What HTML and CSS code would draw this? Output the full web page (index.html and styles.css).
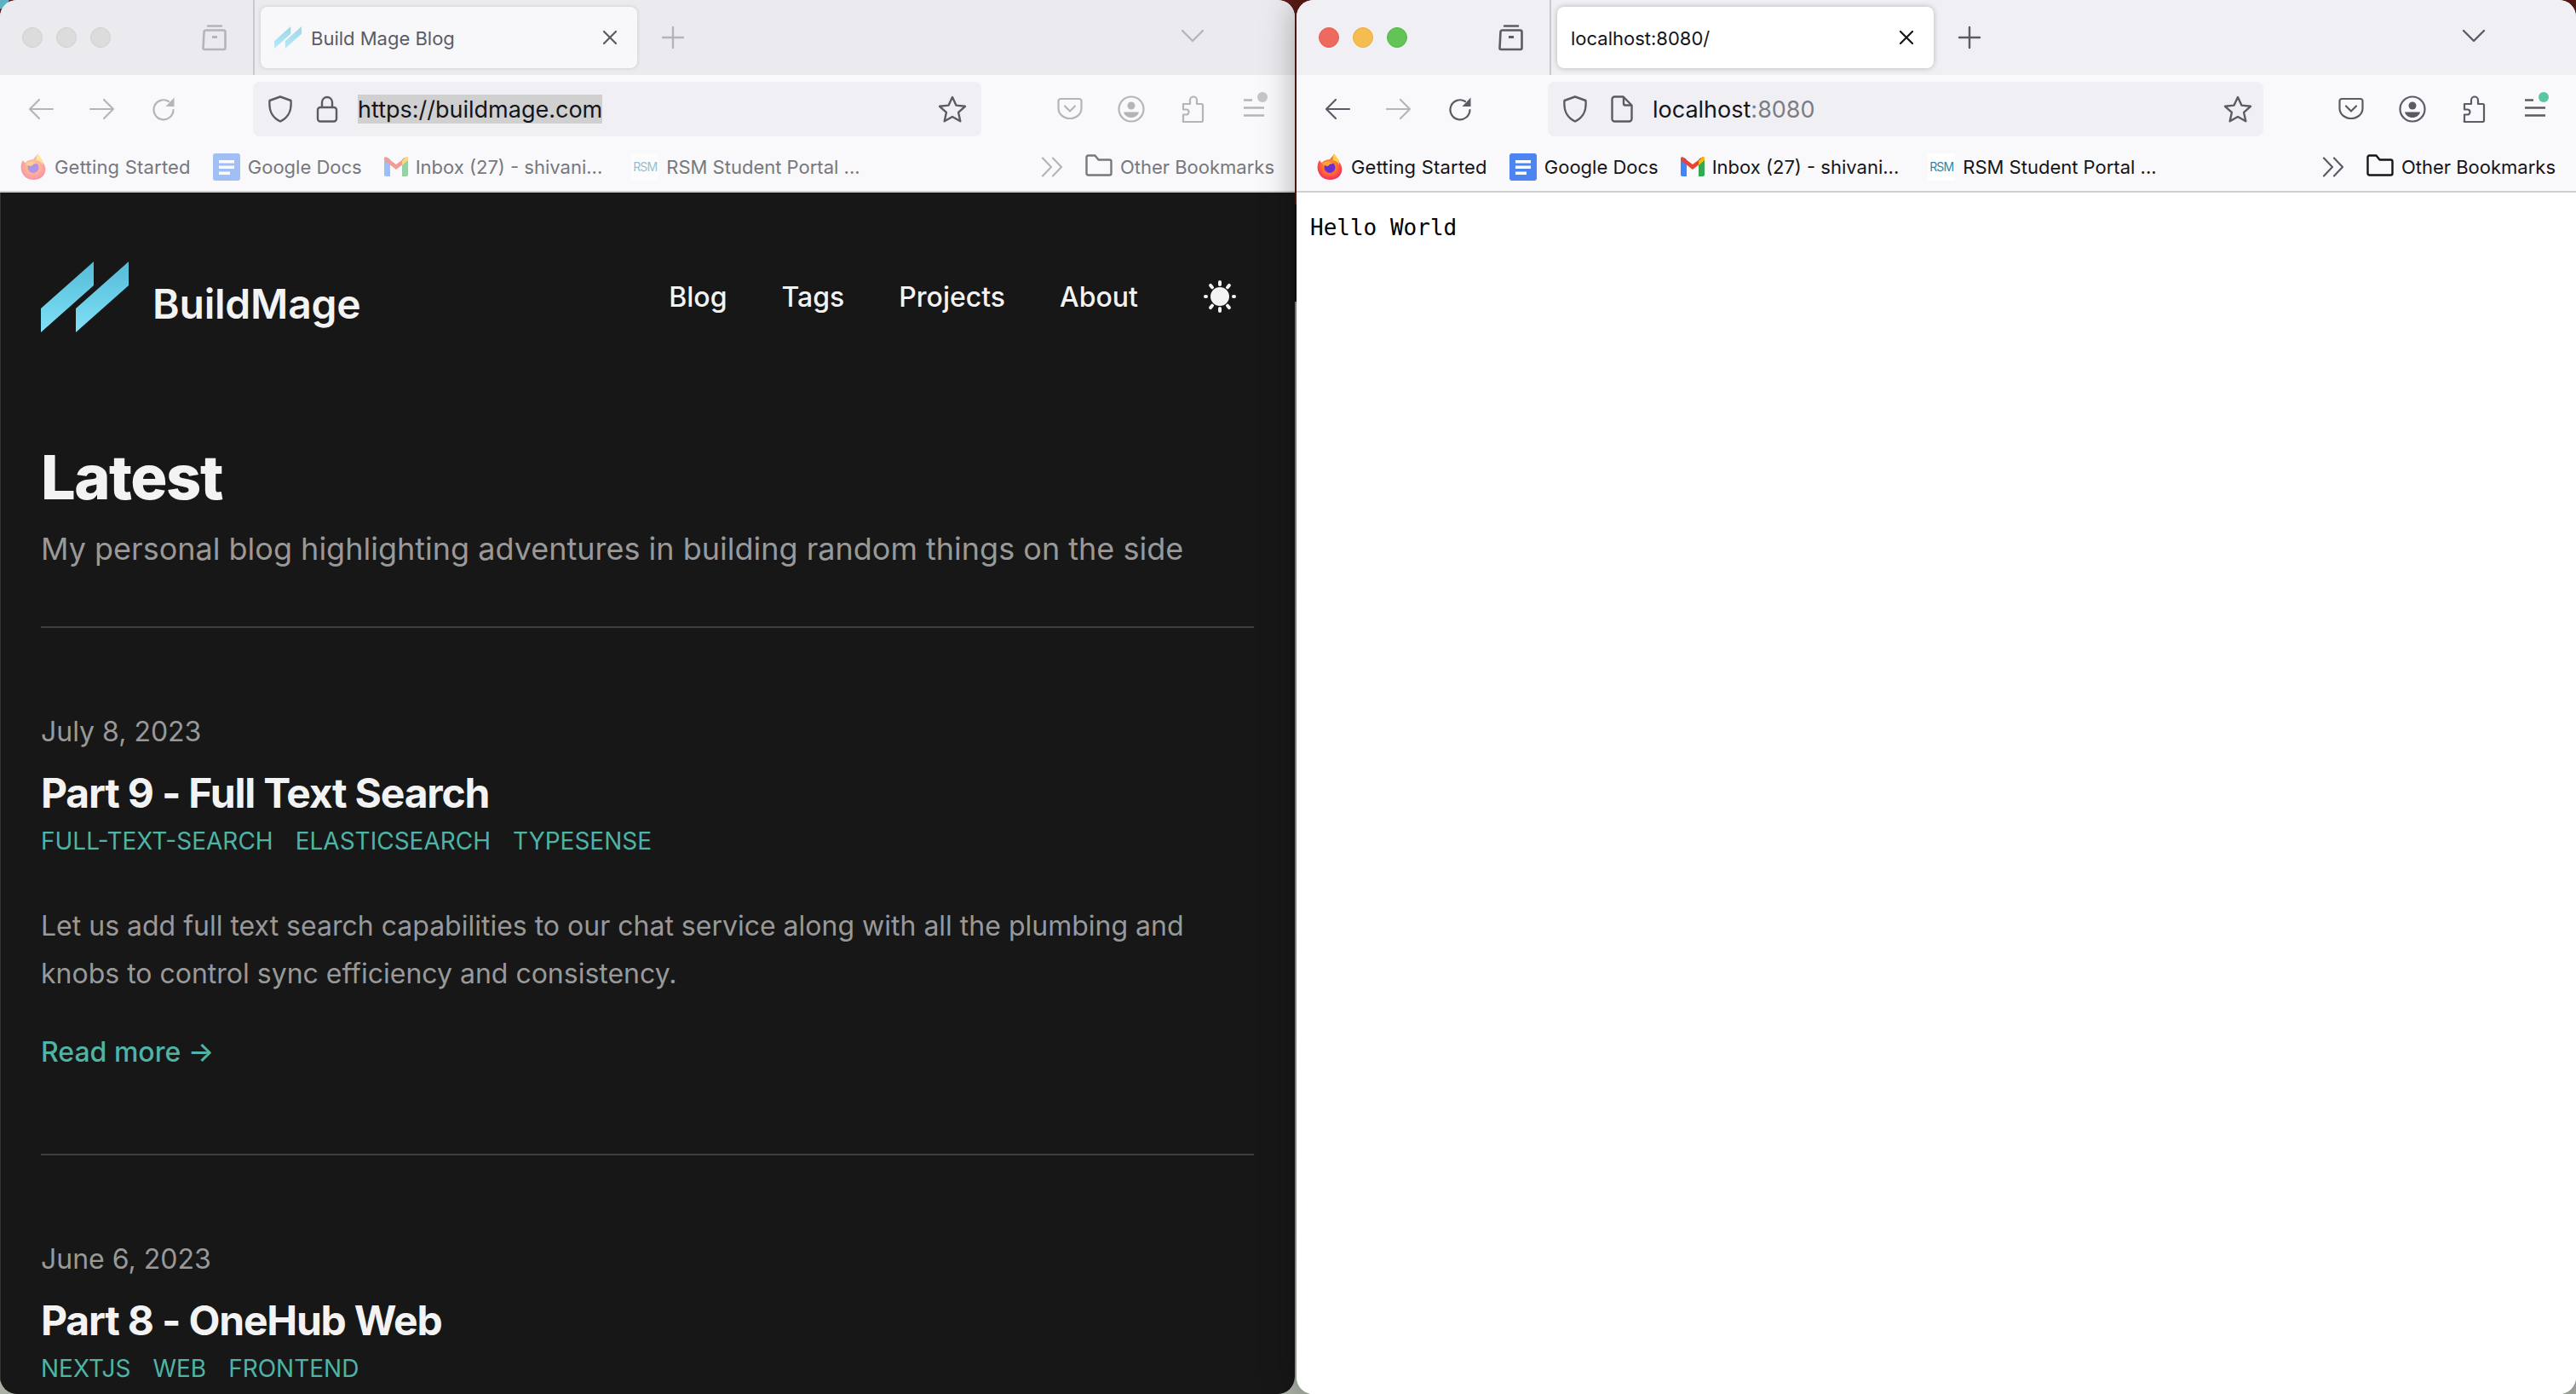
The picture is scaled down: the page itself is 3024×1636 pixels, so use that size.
FILE: index.html
```html
<!DOCTYPE html>
<html lang="en">

<head>
    <meta charset="UTF-8" />
    <title>Browser windows</title>
    <link rel="stylesheet" href="styles.css">
</head>

<body>

    <svg class="sprite" width="0" height="0" aria-hidden="true">
        <defs>
            <linearGradient id="logoFill" x1="0" y1="0" x2="0" y2="1">
                <stop offset="0" stop-color="#55bbd8" />
                <stop offset="1" stop-color="#80e1f7" />
            </linearGradient>
            <radialGradient id="foxFill" cx="0.5" cy="0.45" r="0.6">
                <stop offset="0" stop-color="#ffb01e" />
                <stop offset="0.65" stop-color="#ff5a3c" />
                <stop offset="1" stop-color="#f0206c" />
            </radialGradient>
        </defs>
        <symbol id="i-tabs" viewBox="0 0 32 32">
            <path d="M8 2.500h16M3.500 9.500a2 2 0 0 1 2-2h21a2 2 0 0 1 2 2v19a1.500 1.500 0 0 1-1.500 1.500h-23a1.500 1.500 0 0 1-1.500-1.500z" fill="none" stroke="currentColor" stroke-width="2.600" stroke-linecap="round" />
            <path d="M13 15.500h6" fill="none" stroke="currentColor" stroke-width="3" />
        </symbol>
        <symbol id="i-close" viewBox="0 0 20 20">
            <path d="M3 3l14 14M17 3L3 17" fill="none" stroke="currentColor" stroke-width="2.200" stroke-linecap="round" />
        </symbol>
        <symbol id="i-plus" viewBox="0 0 28 28">
            <path d="M14 2v24M2 14h24" fill="none" stroke="currentColor" stroke-width="2.400" stroke-linecap="round" />
        </symbol>
        <symbol id="i-down" viewBox="0 0 28 16">
            <path d="M2 2l12 12L26 2" fill="none" stroke="currentColor" stroke-width="2.400" stroke-linecap="round" stroke-linejoin="round" />
        </symbol>
        <symbol id="i-back" viewBox="-4 -4 36 32">
            <path d="M12 1L1 12l11 11M1 12h27" fill="none" stroke="currentColor" stroke-width="2.200" stroke-linecap="round" stroke-linejoin="round" />
        </symbol>
        <symbol id="i-forward" viewBox="-4 -4 36 32">
            <path d="M16 1l11 11-11 11M27 12H0" fill="none" stroke="currentColor" stroke-width="2.200" stroke-linecap="round" stroke-linejoin="round" />
        </symbol>
        <symbol id="i-reload" viewBox="-4 -1 36 32">
            <path d="M20 6A11.500 11.500 0 1 0 25.500 16" fill="none" stroke="currentColor" stroke-width="2.200" stroke-linecap="round" />
            <path d="M26.500 1.500v10.500h-10z" fill="currentColor" />
        </symbol>
        <symbol id="i-shield" viewBox="0 0 30 32">
            <path d="M15 1.500L27.500 6c.8 10-1 19-12.500 24.500C3.500 25 1.700 16 2.500 6z" fill="none" stroke="currentColor" stroke-width="2.400" stroke-linejoin="round" />
        </symbol>
        <symbol id="i-lock" viewBox="0 0 26 32">
            <path d="M7 14V8a6 6 0 0 1 12 0v6" fill="none" stroke="currentColor" stroke-width="2.400" />
            <rect x="2" y="14" width="22" height="16.500" rx="3" fill="none" stroke="currentColor" stroke-width="2.400" />
        </symbol>
        <symbol id="i-page" viewBox="0 0 26 32">
            <path d="M4.500 1.500h10l10 10v16a3 3 0 0 1-3 3h-17a3 3 0 0 1-3-3v-23a3 3 0 0 1 3-3z" fill="none" stroke="currentColor" stroke-width="2.400" stroke-linejoin="round" />
            <path d="M15 1.500v8a2 2 0 0 0 2 2h7" fill="none" stroke="currentColor" stroke-width="2.400" />
        </symbol>
        <symbol id="i-star" viewBox="0 0 34 32">
            <path d="M17 2l4.400 9.600 10.600 1.200-7.900 7.100 2.200 10.400L17 25l-9.300 5.300 2.200-10.400L2 12.800l10.600-1.200z" fill="none" stroke="currentColor" stroke-width="2.400" stroke-linejoin="round" />
        </symbol>
        <symbol id="i-pocket" viewBox="-3 -3 36 32">
            <path d="M4 1h22a2.500 2.500 0 0 1 2.500 2.500v8.500c0 7-6 12-13.500 12S1.500 19 1.500 12V3.500A2.500 2.500 0 0 1 4 1z" fill="none" stroke="currentColor" stroke-width="2.200" />
            <path d="M9 9.500l6 6 6-6" fill="none" stroke="currentColor" stroke-width="2.200" stroke-linecap="round" stroke-linejoin="round" />
        </symbol>
        <symbol id="i-account" viewBox="-2 0 36 32">
            <circle cx="16" cy="16" r="14.500" fill="none" stroke="currentColor" stroke-width="2.200" />
            <circle cx="16" cy="12" r="4.500" fill="currentColor" />
            <path d="M7 19.500h18c-1 4-4.500 6.500-9 6.500s-8-2.500-9-6.500z" fill="currentColor" />
        </symbol>
        <symbol id="i-puzzle" viewBox="-4 0 36 32">
            <path d="M3 31h21.500a1.500 1.500 0 0 0 1.500-1.500V11.500A1.500 1.500 0 0 0 24.500 10H19V5.500a4 4 0 0 0-8 0V10H3v6.500h3.500a2.800 2.800 0 0 1 0 6H3V29.500A1.500 1.500 0 0 0 3 31z" fill="none" stroke="currentColor" stroke-width="2.200" stroke-linejoin="round" />
        </symbol>
        <symbol id="i-menu" viewBox="0 0 26 24">
            <path d="M1 1.500h10M1 10.500h24M1 19.500h24" fill="none" stroke="currentColor" stroke-width="2.400" />
        </symbol>
        <symbol id="i-more" viewBox="0 0 26 24">
            <path d="M2 1.500L12 12 2 22.500M14 1.500L24 12 14 22.500" fill="none" stroke="currentColor" stroke-width="2.200" stroke-linecap="round" stroke-linejoin="round" />
        </symbol>
        <symbol id="i-folder" viewBox="0 0 32 26">
            <path d="M3.500 1.500h8l4 5h13a2 2 0 0 1 2 2v14a2 2 0 0 1-2 2h-25a2 2 0 0 1-2-2v-19a2 2 0 0 1 2-2z" fill="none" stroke="currentColor" stroke-width="2.400" stroke-linejoin="round" />
        </symbol>
        <symbol id="i-firefox" viewBox="0 0 32 32">
            <path d="M21 1c2 3 5 5 6 9 5 6 4 14-1 18-5 4-14 4-19 0C1 23 0 14 4 8c1 2 2 3 3 3 2-3 7-4 9-4 1-2 3-3 5-6z" fill="url(#foxFill)" />
            <path d="M21 0c-1 3-2 6-1 8 3 1 6 2 7 6 1-5-3-10-6-14z" fill="#ffd63f" />
            <circle cx="16" cy="16.500" r="6.500" fill="#6b2fd1" />
            <path d="M7 12c3-3 11-3 13 0 -3 0-5 1-6 3-2 0-5-1-7-3z" fill="#ffa436" />
        </symbol>
        <symbol id="i-docs" viewBox="0 0 32 32">
            <rect width="32" height="32" rx="3" fill="#4c84f0" />
            <path d="M7 8h18v3.500H7zM7 14.500h18V18H7zM7 21.500h13V25H7z" fill="#fff" />
        </symbol>
        <symbol id="i-gmail" viewBox="0 0 28 32">
            <path d="M0 8l4-3 3 2v20H2a2 2 0 0 1-2-2z" fill="#4285f4" />
            <path d="M21 7l3-2 4 3v17a2 2 0 0 1-2 2h-5z" fill="#34a853" />
            <path d="M0 8l14 11L28 8v-3l-2-1-12 9L2 4 0 5z" fill="#ea4335" />
            <path d="M21 9l5-5a2 2 0 0 1 2 2v2l-7 6z" fill="#fbbc04" />
        </symbol>
        <symbol id="i-logo" viewBox="0 0 103 83">
            <path d="M62 0v28L0 83V55zM103 0v28L41 83V55z" fill="url(#logoFill)" />
        </symbol>
        <symbol id="i-sun" viewBox="0 0 40 40">
            <circle cx="20" cy="20" r="11" fill="currentColor" />
            <g fill="currentColor">
                <rect x="18" y="1" width="4" height="7" rx="2" />
                <rect x="18" y="32" width="4" height="7" rx="2" />
                <rect x="1" y="18" width="5" height="4" rx="2" />
                <rect x="34" y="18" width="5" height="4" rx="2" />
                <rect x="18" y="1" width="4" height="7" rx="2" transform="rotate(40 20 20)" />
                <rect x="18" y="1" width="4" height="7" rx="2" transform="rotate(-40 20 20)" />
                <rect x="18" y="32" width="4" height="7" rx="2" transform="rotate(40 20 20)" />
                <rect x="18" y="32" width="4" height="7" rx="2" transform="rotate(-40 20 20)" />
            </g>
        </symbol>
    </svg>

    <!-- left window, not focused -->
    <section class="window window-left inactive">
        <div class="tabstrip">
            <div class="lights"><span class="light"></span><span class="light"></span><span class="light"></span></div>
            <svg class="icon-tabs"><use href="#i-tabs" /></svg>
            <span class="tab-sep"></span>
            <div class="tab">
                <svg class="tab-favicon"><use href="#i-logo" /></svg>
                <span class="tab-title">Build Mage Blog</span>
                <svg class="tab-close"><use href="#i-close" /></svg>
            </div>
            <svg class="icon-plus"><use href="#i-plus" /></svg>
            <svg class="icon-down"><use href="#i-down" /></svg>
        </div>
        <div class="toolbar">
            <svg class="tool"><use href="#i-back" /></svg>
            <svg class="tool"><use href="#i-forward" /></svg>
            <svg class="tool"><use href="#i-reload" /></svg>
            <div class="urlbar">
                <svg class="url-icon"><use href="#i-shield" /></svg>
                <svg class="url-icon url-icon-second"><use href="#i-lock" /></svg>
                <span class="url-text url-selected">https://buildmage.com</span>
                <svg class="url-star"><use href="#i-star" /></svg>
            </div>
            <div class="actions">
                <svg class="tool"><use href="#i-pocket" /></svg>
                <svg class="tool"><use href="#i-account" /></svg>
                <svg class="tool"><use href="#i-puzzle" /></svg>
                <span class="menu-btn"><svg class="menu-lines"><use href="#i-menu" /></svg><span class="menu-dot"></span></span>
            </div>
        </div>
        <div class="bookmarks">
            <a class="mark"><svg class="mark-icon"><use href="#i-firefox" /></svg>Getting Started</a>
            <a class="mark"><svg class="mark-icon"><use href="#i-docs" /></svg>Google Docs</a>
            <a class="mark"><svg class="mark-icon mark-gmail"><use href="#i-gmail" /></svg>Inbox (27) - shivani...</a>
            <a class="mark mark-rsm"><span class="rsm-icon">RSM</span>RSM Student Portal ...</a>
            <svg class="more"><use href="#i-more" /></svg>
            <a class="mark"><svg class="folder"><use href="#i-folder" /></svg>Other Bookmarks</a>
        </div>

        <main class="blog">
            <header class="blog-head">
                <a class="brand"><svg class="brand-logo"><use href="#i-logo" /></svg><span class="brand-name">BuildMage</span></a>
                <nav class="blog-nav">
                    <a>Blog</a>
                    <a>Tags</a>
                    <a>Projects</a>
                    <a>About</a>
                    <svg class="sun"><use href="#i-sun" /></svg>
                </nav>
            </header>

            <div class="intro">
                <h1>Latest</h1>
                <p>My personal blog highlighting adventures in building random things on the side</p>
            </div>

            <article class="post">
                <time>July 8, 2023</time>
                <h2>Part 9 - Full Text Search</h2>
                <div class="tags"><a>full-text-search</a><a>elasticsearch</a><a>typesense</a></div>
                <p class="excerpt">Let us add full text search capabilities to our chat service along with all the plumbing and knobs to control sync efficiency and consistency.</p>
                <a class="read-more">Read more →</a>
            </article>

            <article class="post">
                <time>June 6, 2023</time>
                <h2>Part 8 - OneHub Web</h2>
                <div class="tags"><a>nextjs</a><a>web</a><a>frontend</a></div>
            </article>
        </main>
    </section>

    <!-- right window, focused -->
    <section class="window window-right">
        <div class="tabstrip">
            <div class="lights"><span class="light light-red"></span><span class="light light-yellow"></span><span class="light light-green"></span></div>
            <svg class="icon-tabs"><use href="#i-tabs" /></svg>
            <span class="tab-sep"></span>
            <div class="tab">
                <span class="tab-title">localhost:8080/</span>
                <svg class="tab-close"><use href="#i-close" /></svg>
            </div>
            <svg class="icon-plus"><use href="#i-plus" /></svg>
            <svg class="icon-down"><use href="#i-down" /></svg>
        </div>
        <div class="toolbar">
            <svg class="tool"><use href="#i-back" /></svg>
            <svg class="tool tool-off"><use href="#i-forward" /></svg>
            <svg class="tool"><use href="#i-reload" /></svg>
            <div class="urlbar">
                <svg class="url-icon"><use href="#i-shield" /></svg>
                <svg class="url-icon url-icon-second"><use href="#i-page" /></svg>
                <span class="url-text">localhost<span class="url-port">:8080</span></span>
                <svg class="url-star"><use href="#i-star" /></svg>
            </div>
            <div class="actions">
                <svg class="tool"><use href="#i-pocket" /></svg>
                <svg class="tool"><use href="#i-account" /></svg>
                <svg class="tool"><use href="#i-puzzle" /></svg>
                <span class="menu-btn"><svg class="menu-lines"><use href="#i-menu" /></svg><span class="menu-dot"></span></span>
            </div>
        </div>
        <div class="bookmarks">
            <a class="mark"><svg class="mark-icon"><use href="#i-firefox" /></svg>Getting Started</a>
            <a class="mark"><svg class="mark-icon"><use href="#i-docs" /></svg>Google Docs</a>
            <a class="mark"><svg class="mark-icon mark-gmail"><use href="#i-gmail" /></svg>Inbox (27) - shivani...</a>
            <a class="mark mark-rsm"><span class="rsm-icon">RSM</span>RSM Student Portal ...</a>
            <svg class="more"><use href="#i-more" /></svg>
            <a class="mark"><svg class="folder"><use href="#i-folder" /></svg>Other Bookmarks</a>
        </div>

        <main class="plain">
            <pre>Hello World</pre>
        </main>
    </section>

</body>

</html>
```

FILE: styles.css
```css
* {
    box-sizing: border-box;
}

html,
body {
    margin: 0;
    height: 100%;
}

body {
    display: flex;
    gap: 2px;
    overflow: hidden;
    font-family: Inter, "Noto Sans", sans-serif;
    background:
        radial-gradient(circle at 0 0, #5fb0c0 0, #5fb0c0 10px, transparent 11px),
        linear-gradient(#5a1a14 0, #5a1a14 240px, #0c0c0c 240px, #0c0c0c 354px, #8f8f8f 354px, #9aa398 1400px, #aab2a6 100%);
}

.sprite {
    position: absolute;
}

.window {
    display: flex;
    flex-direction: column;
    height: 100%;
    border-radius: 20px;
    overflow: hidden;
    background: #fff;
    color: #15141a;
}

.window-left {
    width: 1520px;
    flex: none;
}

.window-right {
    flex: 1;
    box-shadow: 0 0 40px rgba(0, 0, 0, 0.35);
}

/* tab strip */
.tabstrip {
    display: flex;
    align-items: center;
    height: 88px;
    flex: none;
    padding-right: 104px;
    background: #f0f0f4;
    color: #5b5b66;
}

.inactive .tabstrip {
    background: #ebebef;
    color: #b4b4ba;
}

.lights {
    display: flex;
    gap: 16px;
    padding-left: 26px;
}

.light {
    width: 24px;
    height: 24px;
    border-radius: 50%;
    background: #dcdcdc;
    border: 1px solid #cfcfcf;
}

.light-red {
    background: #ee6a5f;
    border-color: #e35d52;
}

.light-yellow {
    background: #f5bd4f;
    border-color: #e7ae3f;
}

.light-green {
    background: #61c454;
    border-color: #55b548;
}

.icon-tabs {
    width: 32px;
    height: 32px;
    margin-left: 106px;
}

.tab-sep {
    width: 2px;
    height: 100%;
    margin-left: 29px;
    background: #c9c9cd;
}

.tab {
    display: flex;
    align-items: center;
    width: 442px;
    height: 72px;
    margin-left: 7px;
    padding: 0 16px 0 16px;
    border-radius: 8px;
    background: #fff;
    box-shadow: 0 0 6px rgba(0, 0, 0, 0.25);
    color: #15141a;
}

.inactive .tab {
    background: #f8f8fa;
    box-shadow: 0 0 5px rgba(0, 0, 0, 0.14);
    color: #5b5b66;
}

.tab-favicon {
    width: 32px;
    height: 26px;
    margin-right: 11px;
    opacity: 0.55;
}

.tab-title {
    font-size: 22px;
    flex: 1;
    padding-top: 2px;
}

.tab-close {
    width: 20px;
    height: 20px;
    margin-right: 6px;
}

.icon-plus {
    width: 28px;
    height: 28px;
    margin-left: 28px;
}

.icon-down {
    width: 32px;
    height: 16px;
    margin-left: auto;
    margin-top: -4px;
}

/* address row */
.toolbar {
    display: flex;
    align-items: center;
    height: 80px;
    flex: none;
    padding-left: 30px;
    background: #f9f9fb;
    color: #5b5b66;
}

.inactive .toolbar {
    color: #b4b4ba;
}

.tool {
    width: 36px;
    height: 32px;
    margin-right: 36px;
    flex: none;
}

.tool-off {
    color: #b4b4ba;
}

.urlbar {
    flex: 1;
    display: flex;
    align-items: center;
    height: 64px;
    margin-left: 51px;
    margin-right: 86px;
    padding: 0 15px 0 16px;
    border-radius: 8px;
    background: #f0f0f4;
    color: #5b5b66;
}

.window-right .urlbar {
    margin-left: 49px;
    margin-right: 85px;
    padding-right: 13px;
}

.url-icon {
    width: 30px;
    height: 32px;
    flex: none;
    margin-left: 1px;
}

.url-icon-second {
    width: 26px;
    margin-left: 27px;
}

.url-text {
    margin-left: 23px;
    padding-top: 1px;
    font-size: 27px;
    line-height: 33px;
    color: #15141a;
}

.url-selected {
    background: #d0d0d0;
}

.url-port {
    color: #7c7c85;
}

.url-star {
    width: 34px;
    height: 32px;
    margin-left: auto;
    flex: none;
}

.inactive .url-star {
    margin-right: 2px;
}

.actions {
    display: flex;
    align-items: center;
    flex: none;
}

.menu-btn {
    position: relative;
    display: flex;
    width: 36px;
    margin-right: 30px;
}

.menu-lines {
    width: 26px;
    height: 24px;
    margin-left: 5px;
}

.menu-dot {
    position: absolute;
    top: -8px;
    right: 2px;
    width: 12px;
    height: 12px;
    border-radius: 50%;
    background: #5cc6a0;
}

.inactive .menu-dot {
    background: #c4c4c8;
}

/* bookmarks */
.bookmarks {
    display: flex;
    align-items: center;
    gap: 26px;
    height: 58px;
    flex: none;
    padding: 0 24px 1px 23px;
    border-bottom: 2px solid #cfcfd2;
    background: #f9f9fb;
    color: #5b5b66;
}

.mark {
    display: flex;
    align-items: center;
    gap: 9px;
    font-size: 22px;
    color: #15141a;
    white-space: nowrap;
}

.mark:first-child {
    letter-spacing: 0.2px;
}

.inactive .mark {
    color: #77777e;
}

.inactive .bookmarks {
    color: #b4b4ba;
}

.mark-icon {
    width: 32px;
    height: 32px;
}

.inactive .mark-icon,
.inactive .rsm-icon {
    opacity: 0.5;
}

.mark-gmail {
    width: 28px;
}

.mark-rsm {
    margin-left: 8px;
}

.rsm-icon {
    display: flex;
    align-items: center;
    justify-content: center;
    width: 32px;
    height: 32px;
    background: #fff;
    font-size: 14px;
    letter-spacing: -0.8px;
    color: #2d87a8;
}

.more {
    width: 26px;
    height: 24px;
    margin-left: auto;
}

.folder {
    width: 32px;
    height: 26px;
    margin-top: -4px;
}

/* blog page on the left */
.blog {
    flex: 1;
    overflow: hidden;
    padding: 0 48px 0 47px;
    background: #171717;
    border-left: 1px solid #333;
    color: #f3f3f3;
}

.blog-head {
    display: flex;
    align-items: flex-start;
    justify-content: space-between;
    height: 294px;
    padding-top: 81px;
}

.brand {
    display: flex;
    align-items: center;
    gap: 28px;
}

.brand-logo {
    width: 103px;
    height: 83px;
}

.brand-name {
    font-size: 48px;
    font-weight: 600;
    line-height: 60px;
    letter-spacing: -0.2px;
    padding-top: 16px;
}

.blog-nav {
    display: flex;
    align-items: center;
    gap: 64px;
    margin-top: 21px;
    font-size: 32px;
    font-weight: 500;
}

.sun {
    width: 40px;
    height: 40px;
    margin-left: 12px;
    margin-right: 20px;
}

.intro {
    padding-bottom: 63px;
    border-bottom: 2px solid #3e3e3e;
}

h1 {
    margin: 0;
    font-size: 72px;
    line-height: 80px;
    font-weight: 800;
    letter-spacing: -1.5px;
}

.intro p {
    margin: 16px 0 0;
    font-size: 36px;
    line-height: 56px;
    color: #999;
}

.post {
    padding: 98px 0 91px;
    border-bottom: 2px solid #3e3e3e;
}

.post time {
    display: block;
    font-size: 32px;
    line-height: 48px;
    color: #999;
}

h2 {
    margin: 16px 0 0;
    font-size: 48px;
    line-height: 64px;
    font-weight: 700;
    letter-spacing: -1.2px;
}

.tags {
    display: flex;
    gap: 26px;
    margin-top: 4px;
    font-size: 28px;
    line-height: 40px;
    text-transform: uppercase;
    color: #4fb3a5;
}

.excerpt {
    margin: 52px 0 0;
    font-size: 32px;
    line-height: 56px;
    color: #999;
}

.read-more {
    display: block;
    margin-top: 36px;
    font-size: 32px;
    line-height: 56px;
    font-weight: 500;
    color: #4fb3a5;
}

/* plain page on the right */
.plain {
    flex: 1;
    padding: 26px 16px;
    background: #fff;
}

.plain pre {
    margin: 0;
    font-family: "DejaVu Sans Mono", monospace;
    font-size: 26px;
    line-height: 30px;
    color: #000;
}
```
